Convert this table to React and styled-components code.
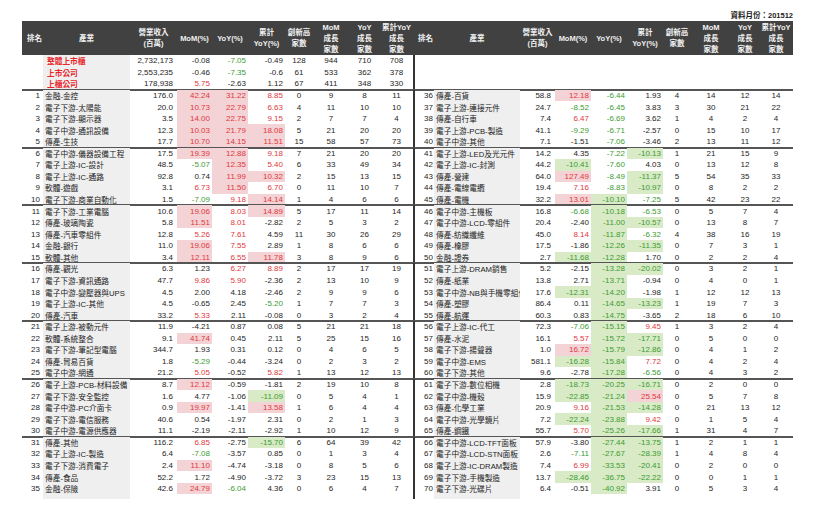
import React from 'react';
import styled, { createGlobalStyle } from 'styled-components';

const GlobalStyle = createGlobalStyle`
    html, body {
        margin: 0;
        padding: 0;
        background: #fff;
    }
    body {
        font-family: "Liberation Sans", "Noto Sans CJK TC", sans-serif;
        color: #1e1e1e;
    }
`;

// 10 columns for the left block, 10 for the right block
const COLS = '21px 87px 47px 35px 36px 37px 28px 36px 31px 33px 21px 86px 35px 36px 36px 36px 28px 40px 28px 34px';
const ROW_H = 11.57;

const Page = styled.div`
    width: 771px;
    padding: 10px 0 0 22px;
`;

const DateLine = styled.div`
    height: 11px;
    line-height: 11px;
    text-align: right;
    font-size: 7.5px;
    font-weight: bold;
    color: #1a1a1a;
`;

const HeaderRow = styled.div`
    display: grid;
    grid-template-columns: ${COLS};
    height: 34px;
    background: #414141;
    color: #f0f0f0;
`;

const HeadCell = styled.div`
    display: flex;
    align-items: center;
    justify-content: ${p => (p.$left ? 'flex-start' : 'center')};
    padding-left: ${p => (p.$left ? '5px' : '0')};
    text-align: center;
    white-space: pre-line;
    font-size: 7.5px;
    font-weight: bold;
    line-height: 11px;
`;

const Row = styled.div`
    position: relative;
    display: grid;
    grid-template-columns: ${COLS};
    height: ${p => p.$h || ROW_H}px;

    &::after {
        content: '';
        display: ${p => (p.$sep ? 'block' : 'none')};
        position: absolute;
        left: 0;
        right: 0;
        bottom: -1px;
        height: 2px;
        background: #555;
    }
`;

const RankCell = styled.div`
    display: flex;
    align-items: center;
    justify-content: flex-end;
    padding-right: ${p => (p.$divider ? '1px' : '3px')};
    border-left: ${p => (p.$divider ? '2px solid #333' : 'none')};
    font-size: 8px;
`;

const NameCell = styled.div`
    display: flex;
    align-items: center;
    padding-left: ${p => (p.$summary ? '4px' : '2px')};
    background: ${p => (p.$blank ? 'transparent' : '#efefef')};
    color: ${p => (p.$summary ? '#e8262b' : '#222')};
    font-size: 7.7px;
    font-weight: ${p => (p.$summary ? 'bold' : 'normal')};
    white-space: nowrap;
    overflow: hidden;
`;

const RevenueCell = styled.div`
    display: flex;
    align-items: center;
    justify-content: flex-end;
    padding-right: 4px;
    font-size: 8px;
`;

const toneColor = { up: '#e0383c', down: '#3c9c32' };
const fillColor = { up: '#f4d3d6', down: '#d8eac6' };

const PctCell = styled.div`
    display: flex;
    align-items: center;
    justify-content: flex-end;
    padding-right: 2px;
    font-size: 8px;
    color: ${p => toneColor[p.$tone] || '#1e1e1e'};
    background: ${p => fillColor[p.$fill] || 'transparent'};
`;

const CountCell = styled.div`
    display: flex;
    align-items: center;
    justify-content: center;
    font-size: 8px;
`;

const headers = [
    ['排名', true],
    ['產業'],
    ['營業收入\n(百萬)'],
    ['MoM(%)'],
    ['YoY(%)'],
    ['累計\nYoY(%)'],
    ['創新高\n家數'],
    ['MoM\n成長\n家數'],
    ['YoY\n成長\n家數'],
    ['累計YoY\n成長\n家數'],
];

const summary = [
    '|整體上市櫃|2,732,173|-0.08|-7.05|-0.49|128|944|710|708',
    '|上市公司|2,553,235|-0.46|-7.35|-0.6|61|533|362|378',
    '|上櫃公司|178,938|5.75|-2.63|1.12|67|411|348|330',
];

const rows = [
    '1|金融-金控|176.0|42.24|31.22|8.85|0|9|8|11',
    '2|電子下游-太陽能|20.0|10.73|22.79|6.63|4|11|10|10',
    '3|電子下游-顯示器|3.5|14.00|22.75|9.15|2|7|7|4',
    '4|電子中游-通訊設備|12.3|10.03|21.79|18.08|5|21|20|20',
    '5|傳產-生技|17.7|10.70|14.15|11.51|15|58|57|73',
    '6|電子中游-儀器設備工程|17.5|19.39|12.88|9.18|7|21|20|20',
    '7|電子上游-IC-設計|48.5|-5.07|12.35|5.40|6|33|49|34',
    '8|電子上游-IC-通路|92.8|0.74|11.99|10.32|2|15|13|15',
    '9|軟體-遊戲|3.1|6.73|11.50|6.70|0|11|10|7',
    '10|電子下游-商業自動化|1.5|-7.09|9.18|14.14|1|4|6|6',
    '11|電子下游-工業電腦|10.6|19.06|8.03|14.89|5|17|11|14',
    '12|傳產-玻璃陶瓷|5.8|11.51|8.01|-2.82|2|5|3|2',
    '13|傳產-汽車零組件|12.8|5.26|7.61|4.59|11|30|26|29',
    '14|金融-銀行|11.0|19.06|7.55|2.89|1|8|6|6',
    '15|軟體-其他|3.4|12.11|6.55|11.78|3|8|9|6',
    '16|傳產-觀光|6.3|1.23|6.27|8.89|2|17|17|19',
    '17|電子下游-資訊通路|47.7|9.86|5.90|-2.36|2|13|10|9',
    '18|電子中游-變壓器與UPS|4.5|2.00|4.18|-2.46|2|9|9|6',
    '19|電子上游-IC-其他|4.5|-0.65|2.45|-5.20|1|7|7|3',
    '20|傳產-汽車|33.2|5.33|2.11|-0.08|0|3|2|4',
    '21|電子上游-被動元件|11.9|-4.21|0.87|0.08|5|21|21|18',
    '22|軟體-系統整合|9.1|41.74|0.45|2.11|5|25|15|16',
    '23|電子下游-筆記型電腦|344.7|1.93|0.31|0.12|0|4|6|5',
    '24|傳產-貿易百貨|1.8|-5.29|-0.44|-3.24|0|2|3|2',
    '25|電子中游-網通|21.2|5.05|-0.52|5.82|1|13|12|13',
    '26|電子上游-PCB-材料設備|8.7|12.12|-0.59|-1.81|2|19|10|8',
    '27|電子下游-安全監控|1.6|4.77|-1.06|-11.09|0|5|4|1',
    '28|電子中游-PC介面卡|0.9|19.97|-1.41|13.58|1|6|4|4',
    '29|電子下游-電信服務|40.6|0.54|-1.97|2.31|0|2|1|3',
    '30|電子中游-電源供應器|11.1|-2.19|-2.11|-2.92|1|10|12|9',
    '31|傳產-其他|116.2|6.85|-2.75|-15.70|6|64|39|42',
    '32|電子上游-IC-製造|6.4|-7.08|-3.57|0.85|0|1|3|4',
    '33|電子下游-消費電子|2.4|11.10|-4.74|-3.18|0|8|5|6',
    '34|傳產-食品|52.2|1.72|-4.90|-3.72|3|23|15|13',
    '35|金融-保險|42.6|24.79|-6.04|4.36|0|6|4|7',
    '36|傳產-百貨|58.8|12.18|-6.44|1.93|4|14|12|14',
    '37|電子上游-連接元件|24.7|-8.52|-6.45|3.83|3|30|21|22',
    '38|傳產-自行車|7.4|6.47|-6.69|3.62|1|4|2|4',
    '39|電子上游-PCB-製造|41.1|-9.29|-6.71|-2.57|0|15|10|17',
    '40|電子中游-其他|7.1|-1.51|-7.06|-3.46|2|13|11|12',
    '41|電子上游-LED及光元件|14.2|4.35|-7.22|-10.13|1|21|15|9',
    '42|電子上游-IC-封測|44.2|-10.41|-7.60|4.03|0|13|12|8',
    '43|傳產-營建|64.0|127.49|-8.49|-11.37|5|54|35|33',
    '44|傳產-電線電纜|19.4|7.16|-8.83|-10.97|0|8|2|2',
    '45|傳產-電機|32.2|13.01|-10.10|-7.25|5|42|23|22',
    '46|電子中游-主機板|16.8|-6.68|-10.18|-6.53|0|5|7|4',
    '47|電子中游-LCD-零組件|20.4|-2.40|-11.00|-10.57|0|13|8|7',
    '48|傳產-紡織纖維|45.0|8.14|-11.87|-6.32|4|38|16|19',
    '49|傳產-橡膠|17.5|-1.86|-12.26|-11.35|0|7|3|1',
    '50|金融-證券|2.7|-11.68|-12.28|1.70|0|2|2|4',
    '51|電子上游-DRAM銷售|5.2|-2.15|-13.28|-20.02|0|3|2|1',
    '52|傳產-紙業|13.8|2.71|-13.71|-0.94|0|4|0|1',
    '53|電子中游-NB與手機零組件|17.6|-12.31|-14.20|-1.98|1|12|12|13',
    '54|傳產-塑膠|86.4|0.11|-14.65|-13.23|1|19|7|3',
    '55|傳產-航運|60.3|0.83|-14.75|-3.65|2|18|6|10',
    '56|電子上游-IC-代工|72.3|-7.06|-15.15|9.45|1|3|2|4',
    '57|傳產-水泥|16.1|5.57|-15.72|-17.71|0|5|0|0',
    '58|電子下游-揚聲器|1.0|16.72|-15.79|-12.86|0|4|1|2',
    '59|電子中游-EMS|581.1|-16.28|-15.84|7.72|0|4|2|4',
    '60|電子下游-其他|9.6|-2.78|-17.28|-6.56|0|4|3|2',
    '61|電子下游-數位相機|2.8|-18.73|-20.25|-16.71|0|2|0|0',
    '62|電子中游-機殼|15.9|-22.85|-21.24|25.54|0|5|7|8',
    '63|傳產-化學工業|20.9|9.16|-21.53|-14.28|0|21|13|12',
    '64|電子中游-光學鏡片|7.2|-22.24|-23.88|9.42|0|1|5|4',
    '65|傳產-鋼鐵|55.7|5.70|-25.26|-17.66|1|31|4|7',
    '66|電子中游-LCD-TFT面板|57.9|-3.80|-27.44|-13.75|1|2|1|1',
    '67|電子中游-LCD-STN面板|2.6|-7.11|-27.67|-28.39|1|4|8|4',
    '68|電子上游-IC-DRAM製造|7.4|6.99|-33.53|-20.41|0|2|0|0',
    '69|電子下游-手機製造|13.7|-28.46|-36.75|-22.22|0|0|1|1',
    '70|電子下游-光碟片|6.4|-0.51|-40.92|3.91|0|5|3|4',
].map(r => r.split('|'));

const tone = v => {
    const n = parseFloat(v);
    if (n > 5) return 'up';
    if (n < -5) return 'down';
    return null;
};

const fill = v => {
    const n = parseFloat(v);
    if (n >= 10) return 'up';
    if (n <= -10) return 'down';
    return null;
};

function Block({ item, right, summary, blank }) {
    if (blank) {
        return (
            <>
                <RankCell $divider={right} />
                <NameCell $blank />
                <RevenueCell /><PctCell /><PctCell /><PctCell />
                <CountCell /><CountCell /><CountCell /><CountCell />
            </>
        );
    }
    const [rank, name, rev, mom, yoy, cum, high, c1, c2, c3] = item;
    return (
        <>
            <RankCell $divider={right}>{rank}</RankCell>
            <NameCell $summary={summary}>{name}</NameCell>
            <RevenueCell>{rev}</RevenueCell>
            <PctCell $tone={tone(mom)} $fill={fill(mom)}>{mom}</PctCell>
            <PctCell $tone={tone(yoy)} $fill={fill(yoy)}>{yoy}</PctCell>
            <PctCell $tone={tone(cum)} $fill={fill(cum)}>{cum}</PctCell>
            <CountCell>{high}</CountCell>
            <CountCell>{c1}</CountCell>
            <CountCell>{c2}</CountCell>
            <CountCell>{c3}</CountCell>
        </>
    );
}

export default function App() {
    const left = rows.slice(0, 35);
    const right = rows.slice(35);
    return (
        <Page>
            <GlobalStyle />
            <DateLine>資料月份：201512</DateLine>
            <HeaderRow>
                {[...headers, ...headers].map(([label, isLeft], i) => (
                    <HeadCell key={i} $left={isLeft}>{label}</HeadCell>
                ))}
            </HeaderRow>
            {summary.map((s, i) => (
                <Row key={'s' + i} $sep={i === 2}>
                    <Block item={s.split('|')} summary />
                    <Block right blank />
                </Row>
            ))}
            {left.map((item, i) => (
                <Row key={i} $sep={i % 5 === 4 && i < 34}>
                    <Block item={item} />
                    <Block item={right[i]} right />
                </Row>
            ))}
            <Row $h={5}>
                <RankCell />
                <NameCell />
                <RevenueCell /><PctCell /><PctCell /><PctCell />
                <CountCell /><CountCell /><CountCell /><CountCell />
                <RankCell $divider />
                <NameCell />
                <RevenueCell /><PctCell /><PctCell /><PctCell />
                <CountCell /><CountCell /><CountCell /><CountCell />
            </Row>
        </Page>
    );
}
